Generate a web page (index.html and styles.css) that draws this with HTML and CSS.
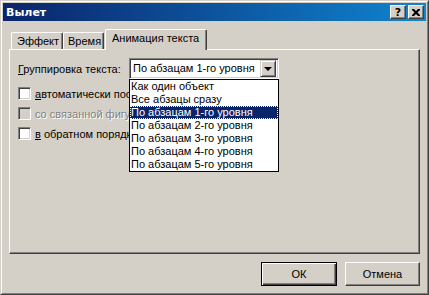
FILE: index.html
```html
<!DOCTYPE html>
<html lang="ru">

<head>
    <meta charset="UTF-8">
    <link rel="stylesheet" href="styles.css">
</head>

<body>
    <div class="window">
        <div class="frame">
            <div class="title-bar">
                <span class="title-text">Вылет</span>
                <div class="title-buttons">
                    <button class="title-button help-button">?</button>
                    <button class="title-button close-button">
                        <svg width="8" height="7" viewBox="0 0 8 7">
                            <path d="M0 0h2l2 2 2-2h2v1l-2.5 2.5 2.5 2.5v1h-2l-2-2-2 2h-2v-1l2.5-2.5-2.5-2.5z" fill="#000"/>
                        </svg>
                    </button>
                </div>
            </div>

            <div class="content">
                <div class="tabs">
                    <div class="tab tab-effect">Эффект</div>
                    <div class="tab tab-time">Время</div>
                    <div class="tab tab-active">Анимация текста</div>
                </div>

                <div class="tab-panel">
                    <div class="group-row">
                        <span class="group-label"><u>Г</u>руппировка текста:</span>
                        <div class="combo">
                            <div class="combo-value">По абзацам 1-го уровня</div>
                            <div class="combo-button">
                                <span class="arrow"></span>
                            </div>

                            <ul class="combo-list">
                                <li>Как один объект</li>
                                <li>Все абзацы сразу</li>
                                <li class="selected">По абзацам 1-го уровня</li>
                                <li>По абзацам 2-го уровня</li>
                                <li>По абзацам 3-го уровня</li>
                                <li>По абзацам 4-го уровня</li>
                                <li>По абзацам 5-го уровня</li>
                            </ul>
                        </div>
                    </div>

                    <div class="checks">
                        <label class="check-row">
                            <span class="checkbox"></span>
                            <span><u>а</u>втоматически после</span>
                        </label>
                        <label class="check-row disabled">
                            <span class="checkbox"></span>
                            <span>со связанной фигурой</span>
                        </label>
                        <label class="check-row">
                            <span class="checkbox"></span>
                            <span><u>в</u> обратном порядке</span>
                        </label>
                    </div>
                </div>

                <div class="dialog-buttons">
                    <button class="push-button default-button">ОК</button>
                    <button class="push-button">Отмена</button>
                </div>
            </div>
        </div>
    </div>
</body>

</html>
```

FILE: styles.css
```css
html,
body {
    margin: 0;
    padding: 0;
}

body {
    width: 429px;
    height: 295px;
    background-color: #d4d0c8;
    font-family: "Liberation Sans", Arial, sans-serif;
    font-size: 11px;
    color: #000;
}

.window {
    box-sizing: border-box;
    width: 429px;
    height: 295px;
    border: 1px solid;
    border-color: #d4d0c8 #404040 #404040 #d4d0c8;
}

.frame {
    box-sizing: border-box;
    height: 100%;
    border: 1px solid;
    border-color: #fff #808080 #808080 #fff;
    padding: 1px;
}

.title-bar {
    height: 18px;
    display: flex;
    align-items: center;
    justify-content: space-between;
    background: linear-gradient(90deg, #0a246a, #1084d0);
    padding-left: 3px;
}

.title-text {
    color: #fff;
    font-family: "DejaVu Sans", sans-serif;
    font-weight: bold;
    font-size: 11px;
}

.title-buttons {
    display: flex;
    gap: 2px;
    margin-right: 2px;
}

.title-button {
    box-sizing: border-box;
    width: 16px;
    height: 14px;
    padding: 0;
    margin: 0;
    background-color: #d4d0c8;
    border: 1px solid;
    border-color: #fff #404040 #404040 #fff;
    box-shadow: inset -1px -1px #808080;
    display: flex;
    align-items: center;
    justify-content: center;
    font-family: "DejaVu Sans", sans-serif;
    font-weight: bold;
    font-size: 11px;
    line-height: 1;
}

.content {
    padding: 8px 6px 0 6px;
}

/* tabs */
.tabs {
    display: flex;
    align-items: flex-end;
    height: 20px;
    padding-left: 2px;
}

.tab {
    box-sizing: border-box;
    height: 17px;
    padding: 2px 0 0 5px;
    border: 1px solid;
    border-bottom: none;
    border-color: #fff #404040 #fff #fff;
    border-radius: 2px 2px 0 0;
    box-shadow: inset -1px 0 #808080;
    white-space: nowrap;
}

.tab-effect {
    width: 52px;
}

.tab-time {
    width: 41px;
    padding-left: 4px;
}

.tab-active {
    position: relative;
    z-index: 1;
    width: 102px;
    height: 21px;
    margin-bottom: -1px;
    margin-left: 1px;
    padding: 2px 0 0 6px;
    background-color: #d4d0c8;
}

.tab-panel {
    box-sizing: border-box;
    height: 205px;
    border: 1px solid;
    border-color: #fff #404040 #404040 #fff;
    box-shadow: inset -1px -1px #808080;
    padding: 8px;
}

.group-row {
    display: flex;
    align-items: center;
}

.group-label {
    width: 111px;
}

/* combo box */
.combo {
    position: relative;
    box-sizing: border-box;
    width: 150px;
    height: 21px;
    display: flex;
    border: 1px solid;
    border-color: #808080 #fff #fff #808080;
    box-shadow: inset 1px 1px #404040, inset -1px -1px #d4d0c8;
    padding: 2px;
    background-color: #fff;
}

.combo-value {
    flex: 1;
    padding-left: 1px;
    line-height: 15px;
}

.combo-button {
    box-sizing: border-box;
    width: 16px;
    height: 17px;
    margin-top: -1px;
    background-color: #d4d0c8;
    border: 1px solid;
    border-color: #d4d0c8 #404040 #404040 #d4d0c8;
    box-shadow: inset 1px 1px #fff, inset -1px -1px #808080;
    display: flex;
    align-items: center;
    justify-content: center;
}

.arrow {
    width: 0;
    height: 0;
    border-left: 4px solid transparent;
    border-right: 4px solid transparent;
    border-top: 4px solid #000;
}

.combo-list {
    position: absolute;
    z-index: 5;
    left: -1px;
    top: 20px;
    box-sizing: border-box;
    width: 150px;
    margin: 0;
    padding: 0;
    list-style: none;
    background-color: #fff;
    border: 1px solid #000;
}

.combo-list li {
    height: 13px;
    line-height: 13px;
    padding-left: 1px;
    white-space: nowrap;
}

.combo-list .selected {
    background-color: #0a246a;
    color: #fff;
    outline: 1px dotted #fff;
    outline-offset: -1px;
}

/* check boxes */
.checks {
    display: flex;
    flex-direction: column;
    gap: 7px;
    margin-top: 8px;
}

.check-row {
    display: flex;
    align-items: center;
    gap: 4px;
    height: 13px;
}

.checkbox {
    box-sizing: border-box;
    width: 13px;
    height: 13px;
    border: 1px solid;
    border-color: #808080 #fff #fff #808080;
    box-shadow: inset 1px 1px #404040, inset -1px -1px #d4d0c8;
    background-color: #fff;
}

.disabled {
    color: #808080;
    text-shadow: 1px 1px #fff;
}

.disabled .checkbox {
    background-color: #d4d0c8;
}

/* bottom buttons */
.dialog-buttons {
    display: flex;
    justify-content: flex-end;
    gap: 8px;
    margin-top: 8px;
}

.push-button {
    box-sizing: border-box;
    width: 75px;
    height: 24px;
    margin: 0;
    padding: 0;
    background-color: #d4d0c8;
    border: 1px solid;
    border-color: #fff #404040 #404040 #fff;
    box-shadow: inset -1px -1px #808080;
    font-family: "Liberation Sans", Arial, sans-serif;
    font-size: 11px;
    color: #000;
}

.default-button {
    width: 76px;
    border-color: #000;
    box-shadow: inset 1px 1px #fff, inset -1px -1px #404040, inset -2px -2px #808080;
}
```
